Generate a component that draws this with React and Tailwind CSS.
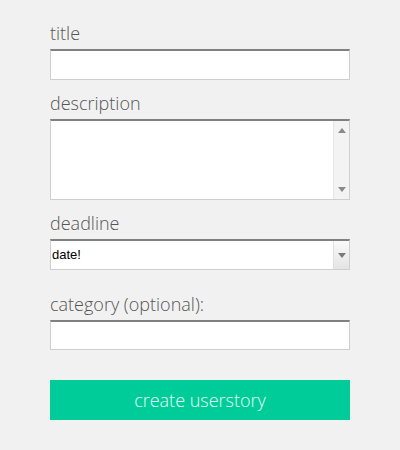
import { useState } from "react";

const font = { fontFamily: '"Open Sans", "Liberation Sans", sans-serif' };

function Label({ children }) {
  return (
    <label className="block text-[18px] leading-[27px] font-light text-[#555555] mb-[2px]">
      {children}
    </label>
  );
}

const boxClass =
  "w-full bg-white border border-[#cfcfcf] border-t-2 border-t-[#808080] outline-none";

export default function App() {
  const [title, setTitle] = useState("");
  const [description, setDescription] = useState("");
  const [category, setCategory] = useState("");

  return (
    <div className="min-h-[450px] w-full bg-[#f1f1f1]" style={font}>
      <form className="w-[300px] mx-auto pt-[20px]" onSubmit={(e) => e.preventDefault()}>
        <div>
          <Label>title</Label>
          <input
            type="text"
            value={title}
            onChange={(e) => setTitle(e.target.value)}
            className={`${boxClass} h-[31px] px-1 text-sm`}
          />
        </div>

        <div className="mt-[10px]">
          <Label>description</Label>
          <div className={`${boxClass} h-[81px] flex`}>
            <textarea
              value={description}
              onChange={(e) => setDescription(e.target.value)}
              className="flex-1 resize-none outline-none px-1 text-sm"
            />
            <div className="w-[16px] bg-[#f3f3f3] border-l border-[#e6e6e6] flex flex-col items-center justify-between py-[7px]">
              <svg width="8" height="5" viewBox="0 0 8 5">
                <path d="M0 5 L4 0 L8 5 Z" fill="#8a8a8a" />
              </svg>
              <svg width="8" height="5" viewBox="0 0 8 5">
                <path d="M0 0 L8 0 L4 5 Z" fill="#8a8a8a" />
              </svg>
            </div>
          </div>
        </div>

        <div className="mt-[10px]">
          <Label>deadline</Label>
          <div className="relative">
            <select
              defaultValue="date"
              className={`${boxClass} h-[31px] appearance-none pl-[1px] pr-5 text-[13px] text-black`}
              style={{ fontFamily: '"Liberation Sans", Arial, sans-serif' }}
            >
              <option value="date">date!</option>
            </select>
            <div className="absolute right-[1px] top-[2px] bottom-[1px] w-[16px] bg-gradient-to-b from-[#fafafa] to-[#e4e4e4] border-l border-[#e0e0e0] flex items-center justify-center pointer-events-none">
              <svg width="8" height="5" viewBox="0 0 8 5">
                <path d="M0 0 L8 0 L4 5 Z" fill="#7a7a7a" />
              </svg>
            </div>
          </div>
        </div>

        <div className="mt-[21px]">
          <Label>category (optional):</Label>
          <input
            type="text"
            value={category}
            onChange={(e) => setCategory(e.target.value)}
            className={`${boxClass} h-[30px] px-1 text-sm`}
          />
        </div>

        <button
          type="submit"
          className="mt-[30px] w-full h-[40px] bg-[#00cc99] text-[18px] font-light text-white/90"
        >
          create userstory
        </button>
      </form>
    </div>
  );
}
